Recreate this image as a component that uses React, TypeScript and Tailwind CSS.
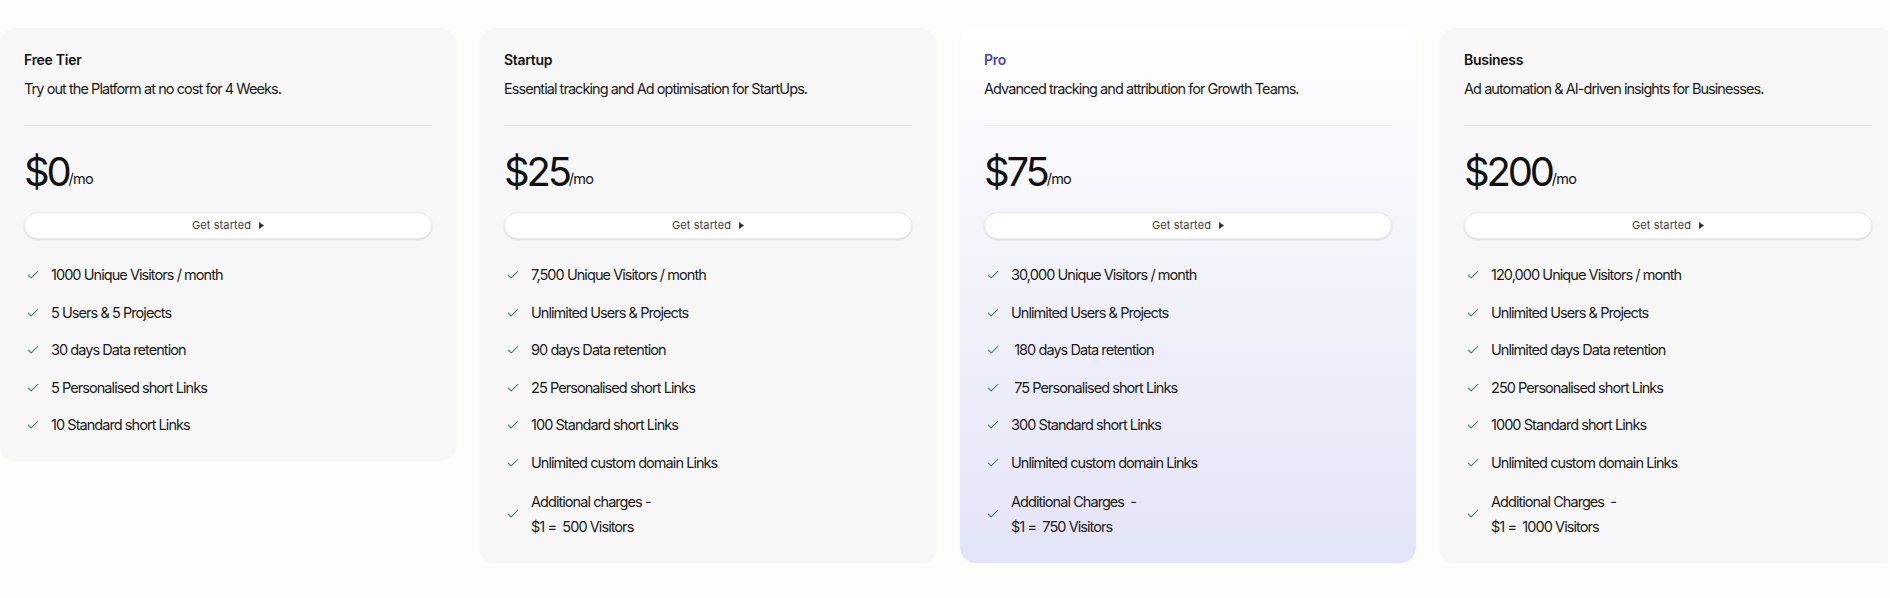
import { Check } from "lucide-react";

type Plan = {
  name: string;
  blurb: string;
  price: string;
  features: string[];
  extra?: [string, string];
  pro?: boolean;
};

const plans: Plan[] = [
  {
    name: "Free Tier",
    blurb: "Try out the Platform at no cost for 4 Weeks.",
    price: "$0",
    features: [
      "1000 Unique Visitors / month",
      "5 Users & 5 Projects",
      "30 days Data retention",
      "5 Personalised short Links",
      "10 Standard short Links",
    ],
  },
  {
    name: "Startup",
    blurb: "Essential tracking and Ad optimisation for StartUps.",
    price: "$25",
    features: [
      "7,500 Unique Visitors / month",
      "Unlimited Users & Projects",
      "90 days Data retention",
      "25 Personalised short Links",
      "100 Standard short Links",
      "Unlimited custom domain Links",
    ],
    extra: ["Additional charges -", "$1 =  500 Visitors"],
  },
  {
    name: "Pro",
    blurb: "Advanced tracking and attribution for Growth Teams.",
    price: "$75",
    pro: true,
    features: [
      "30,000 Unique Visitors / month",
      "Unlimited Users & Projects",
      "\u00a0180 days Data retention",
      "\u00a075 Personalised short Links",
      "300 Standard short Links",
      "Unlimited custom domain Links",
    ],
    extra: ["Additional Charges  -", "$1 =  750 Visitors"],
  },
  {
    name: "Business",
    blurb: "Ad automation & AI-driven insights for Businesses.",
    price: "$200",
    features: [
      "120,000 Unique Visitors / month",
      "Unlimited Users & Projects",
      "Unlimited days Data retention",
      "250 Personalised short Links",
      "1000 Standard short Links",
      "Unlimited custom domain Links",
    ],
    extra: ["Additional Charges  -", "$1 =  1000 Visitors"],
  },
];

const Tick = () => (
  <Check size={14} strokeWidth={1.8} className="shrink-0 text-[#357d60]" />
);

const PlanCard = ({ plan }: { plan: Plan }) => (
  <div
    className={`w-[456px] shrink-0 rounded-2xl px-6 pt-[22px] pb-6 shadow-[0_1px_3px_rgba(0,0,0,0.04)] ${
      plan.pro
        ? "bg-gradient-to-b from-[#ffffff] via-[#f1f1fa] to-[#e4e4f8]"
        : "bg-[#f7f7f7]"
    }`}
  >
    {/* Header */}
    <h3
      className={`text-[14px] leading-5 font-semibold tracking-[-0.02em] ${
        plan.pro ? "text-[#4f3ec8]" : "text-[#111]"
      }`}
    >
      {plan.name}
    </h3>
    <p className="mt-2 text-[14.5px] leading-[22px] tracking-[-0.065em] text-[#1a1a1a]">
      {plan.blurb}
    </p>
    <div className={`mt-[25px] h-px ${plan.pro ? "bg-[#eeeef4]" : "bg-[#e2e2e2]"}`} />

    {/* Price */}
    <div className="mt-[26px] flex items-baseline text-[#111]">
      <span className="text-[40px] leading-none font-normal tracking-[-0.08em]">{plan.price}</span>
      <span className="relative -top-[2px] text-[14.5px] tracking-[-0.05em]">/mo</span>
    </div>

    {/* CTA */}
    <button className="mt-5 flex h-[27px] w-full items-center justify-center gap-2 rounded-full border border-[#ececec] bg-white text-[11px] tracking-[0.01em] text-[#3d3d3d] shadow-[0_1px_2px_rgba(0,0,0,0.12)]">
      Get started
      <svg width="5" height="7" viewBox="0 0 5 7" className="fill-[#333]">
        <path d="M0 0 L5 3.5 L0 7 Z" />
      </svg>
    </button>

    {/* Features */}
    <ul className="mt-[25px] flex flex-col gap-[15.5px] text-[14.5px] tracking-[-0.065em] text-[#1a1a1a]">
      {plan.features.map((f) => (
        <li key={f} className="flex items-center gap-[11px] pl-[2px] leading-[22px]">
          <Tick />
          <span>{f}</span>
        </li>
      ))}
      {plan.extra && (
        <li className="flex items-center gap-[11px] pl-[2px] leading-[25px]">
          <Tick />
          <span className="flex flex-col whitespace-pre">
            <span>{plan.extra[0]}</span>
            <span>{plan.extra[1]}</span>
          </span>
        </li>
      )}
    </ul>
  </div>
);

const App = () => {
  return (
    <div className="min-h-[598px] w-full overflow-hidden bg-[#fdfdfb] font-['Inter',sans-serif]">
      <div className="flex w-[1888px] items-start gap-6 overflow-hidden pt-7">
        {plans.map((p) => (
          <PlanCard key={p.name} plan={p} />
        ))}
      </div>
    </div>
  );
};

export default App;
